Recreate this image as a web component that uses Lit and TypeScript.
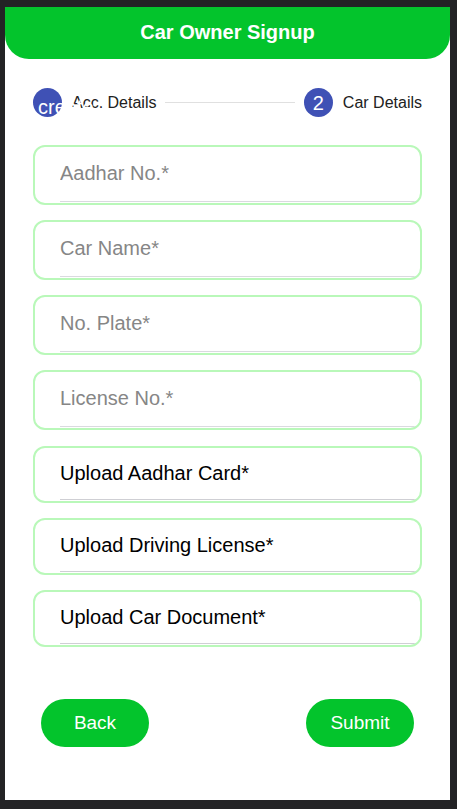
import { LitElement, html, css } from "lit";
import { customElement } from "lit/decorators.js";

interface Field {
  id: string;
  label: string;
}

const TEXT_FIELDS: Field[] = [
  { id: "aadhar", label: "Aadhar No.*" },
  { id: "car-name", label: "Car Name*" },
  { id: "plate", label: "No. Plate*" },
  { id: "license", label: "License No.*" },
];

const UPLOADS: Field[] = [
  { id: "aadhar-file", label: "Upload Aadhar Card*" },
  { id: "license-file", label: "Upload Driving License*" },
  { id: "car-file", label: "Upload Car Document*" },
];

@customElement("app-root")
export class AppRoot extends LitElement {
  static styles = css`
    :host {
      display: flex;
      box-sizing: border-box;
      min-height: 100vh;
      padding: 7px 7px 9px 5px;
      background: #232325;
      font-family: "Liberation Sans", Arial, sans-serif;
    }
    .page {
      flex: 1;
      min-width: 0;
      background: #fff;
    }
    .header {
      padding-bottom: 2px;
      background: #03c42c;
      border-radius: 0 0 24px 24px;
    }
    .title {
      margin: 0;
      color: #fff;
      font-size: 20px;
      line-height: 50px;
      font-weight: bold;
      text-align: center;
    }
    .content {
      padding: 29px 28px 0;
    }
    .steps {
      display: flex;
      align-items: center;
      gap: 9px;
      list-style: none;
      margin: 0 0 28px;
      padding: 0;
    }
    .step {
      display: flex;
      align-items: center;
      gap: 10px;
      font-size: 16px;
      line-height: 20px;
      color: #212121;
      white-space: nowrap;
    }
    .badge {
      display: flex;
      align-items: center;
      justify-content: center;
      box-sizing: border-box;
      width: 29px;
      height: 29px;
      border-radius: 50%;
      background: #3f51b5;
      color: #fff;
      font-size: 20px;
    }
    /* The ligature name spills out of the badge and across the step label. */
    .badge.done {
      position: relative;
      z-index: 1;
      justify-content: flex-start;
      padding: 8px 0 0 5px;
    }
    .line {
      flex: 1;
      height: 1px;
      background: #e0e0e0;
    }
    .form {
      display: flex;
      flex-direction: column;
      gap: 16px;
    }
    .group {
      display: flex;
      flex-direction: column;
      gap: 15px;
    }
    .field {
      display: block;
      box-sizing: border-box;
      overflow: hidden;
      padding-left: 25px;
      border: 2px solid #b9f8b9;
      border-radius: 12px;
      font-size: 20px;
      color: #000;
    }
    .text {
      height: 60px;
    }
    .upload {
      position: relative;
      height: 57px;
      cursor: pointer;
    }
    .input {
      display: block;
      box-sizing: border-box;
      width: 100%;
      height: 55px;
      padding: 0 0 2px;
      border: 0;
      border-bottom: 1px solid #dadadf;
      outline: 0;
      background: none;
      font: inherit;
    }
    .input::placeholder {
      color: #868686;
      opacity: 1;
    }
    .caption {
      display: block;
      height: 51px;
      line-height: 50px;
      border-bottom: 1px solid #cfcfd4;
    }
    .file {
      position: absolute;
      inset: 0;
      opacity: 0;
    }
    .actions {
      display: flex;
      justify-content: space-between;
      margin-top: 36px;
      padding: 0 8px;
    }
    .button {
      width: 108px;
      height: 48px;
      padding: 0;
      border: 0;
      border-radius: 24px;
      background: #03c42c;
      color: #fff;
      font: 19px "Liberation Sans", Arial, sans-serif;
      cursor: pointer;
    }
  `;

  render() {
    return html`
      <main class="page">
        <header class="header"><h1 class="title">Car Owner Signup</h1></header>
        <div class="content">
          <ol class="steps">
            <li class="step"><span class="badge done">create</span>Acc. Details</li>
            <li class="line" role="presentation"></li>
            <li class="step" aria-current="step"><span class="badge">2</span>Car Details</li>
          </ol>
          <form class="form" @submit=${(e: Event) => e.preventDefault()}>
            <div class="group">
              ${TEXT_FIELDS.map(
                (f) => html`<label class="field text" for=${f.id}>
                  <input class="input" type="text" id=${f.id} name=${f.id} placeholder=${f.label} aria-label=${f.label} />
                </label>`
              )}
            </div>
            <div class="group">
              ${UPLOADS.map(
                (f) => html`<label class="field upload" for=${f.id}>
                  <span class="caption">${f.label}</span>
                  <input class="file" type="file" id=${f.id} name=${f.id} />
                </label>`
              )}
            </div>
            <div class="actions">
              <button class="button" type="button">Back</button>
              <button class="button" type="submit">Submit</button>
            </div>
          </form>
        </div>
      </main>
    `;
  }
}
